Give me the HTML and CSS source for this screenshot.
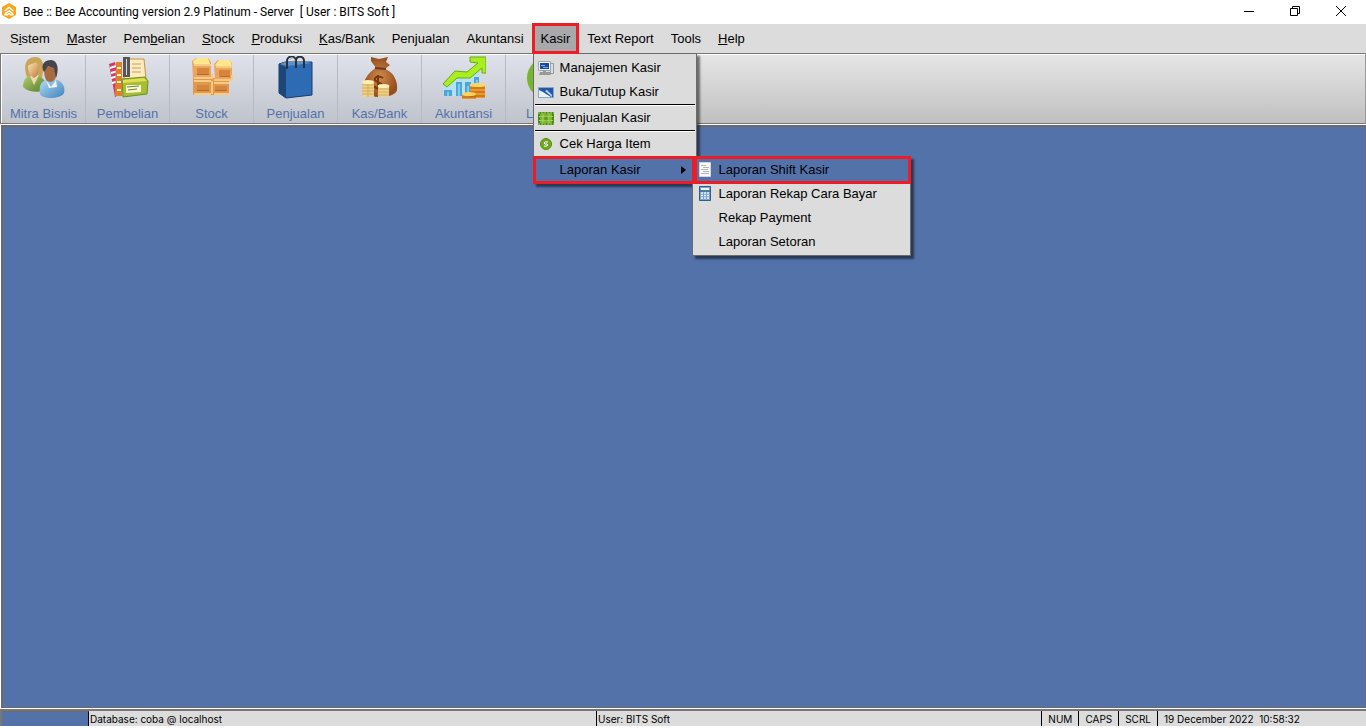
FILE: index.html
```html
<!DOCTYPE html>
<html lang="id">
<head>
<meta charset="utf-8">
<title>Bee Accounting</title>
<link rel="stylesheet" href="styles.css">
</head>
<body>
<div class="window">
  <header class="titlebar">
    <svg class="logo" viewBox="0 0 14 16"><path d="M7 0l7 4v8l-7 4-7-4V4z" fill="#f9a51b"/><path d="M2.500 8L7 4.500 11.500 8M3 11.500l1-1.500 3-2 3 2 1 1.500-2 .5-2-1.500L5 12z" fill="none" stroke="#fff" stroke-width="1.500"/></svg>
    <h1 class="title">Bee :: Bee Accounting version 2.9 Platinum - Server&nbsp; [ User : BITS Soft ]</h1>
    <div class="controls">
      <button class="control" aria-label="Minimize"><svg viewBox="0 0 12 12"><path d="M1 6.500h10" /></svg></button>
      <button class="control" aria-label="Restore"><svg viewBox="0 0 12 12"><path d="M1.500 3.500h7v7h-7zM3.500 3.500v-2h7v7h-2"/></svg></button>
      <button class="control" aria-label="Close"><svg viewBox="0 0 12 12"><path d="M1 1l10 10M11 1L1 11"/></svg></button>
    </div>
  </header>
  <nav class="menubar">
    <button class="menu">S<u>i</u>stem</button>
    <button class="menu"><u>M</u>aster</button>
    <button class="menu">Pem<u>b</u>elian</button>
    <button class="menu"><u>S</u>tock</button>
    <button class="menu"><u>P</u>roduksi</button>
    <button class="menu"><u>K</u>as/Bank</button>
    <button class="menu">Penjualan</button>
    <button class="menu">Akuntansi</button>
    <div class="menu-holder">
      <button class="menu open marked">Kasir</button>
      <div class="popup main-popup">
        <button class="item"><svg class="mini" viewBox="0 0 16 16"><path d="M12.500 3.500h3v10h-3z" fill="#ddd" stroke="#999"/><path d="M.5 1.500h12v9H.5z" fill="#f4f4f4" stroke="#9aa6b8"/><path d="M2 3h9v6H2z" fill="#174d9b"/><path d="M3 5.500h4M5 7.500h5" stroke="#78b5e8"/><path d="M5 11h3v1H5zM2 12h10l1 3H1z" fill="#999"/></svg>Manajemen Kasir</button>
        <button class="item"><svg class="mini" viewBox="0 0 16 16"><path d="M.5 3.500h15v10H.5z" fill="#2458a8" stroke="#8ba4cc"/><path d="M1 6l4 2 3 2 5 3H1z" fill="#eaf2fc"/><path d="M7 7l2-1 5 5v2z" fill="#bdd9f4"/></svg>Buka/Tutup Kasir</button>
        <hr class="separator">
        <button class="item"><svg class="mini" viewBox="0 0 16 16"><path d="M0 2h16v13H0z" fill="#4a8a0c"/><path d="M2 4h12v9H2z" fill="#79b52d"/><path d="M0 3h16M0 14h16" stroke="#b2d678" stroke-dasharray="2 1"/><path d="M1 6.500h14M1 10.500h14M5 3v11M11 3v11" stroke="#a6cf66"/><circle cx="8" cy="8.500" r="2" fill="#5f9f1b"/></svg>Penjualan Kasir</button>
        <hr class="separator">
        <button class="item"><svg class="mini" viewBox="0 0 16 16"><circle cx="8" cy="8" r="5.500" fill="#70aa24" stroke="#528b12"/><path d="M10 6H7l-1 1 1 1h2l1 1-1 1H6" fill="none" stroke="#fff"/></svg>Cek Harga Item</button>
        <hr class="separator clear">
        <div class="submenu-holder">
          <button class="item selected marked"><span class="mini"></span>Laporan Kasir<svg class="arrow" viewBox="0 0 5 8"><path d="M0 0l5 4-5 4z"/></svg></button>
          <div class="popup sub-popup">
            <button class="item selected marked"><svg class="mini" viewBox="0 0 16 16"><path d="M2.500.5h11v14h-11z" fill="#f8f8f8" stroke="#d4d4d4"/><path d="M4 3.500h5M6 5.500h6M4 7.500h7M6 9.500h6M4 11.500h8" stroke="#b4b4b4"/></svg>Laporan Shift Kasir</button>
            <button class="item"><svg class="mini" viewBox="0 0 16 16"><path d="M2.500.5h11v14h-11z" fill="#7da3ca" stroke="#2e5c8b"/><path d="M4 2h8v2H4z" fill="#edf7ff"/><path d="M3 5h10" stroke="#20517f"/><path d="M4 7h8M4 9.500h8M4 12h8" stroke="#e5f2ff" stroke-width="1.500" stroke-dasharray="2 1"/></svg>Laporan Rekap Cara Bayar</button>
            <button class="item"><span class="mini"></span>Rekap Payment</button>
            <button class="item"><span class="mini"></span>Laporan Setoran</button>
          </div>
        </div>
      </div>
    </div>
    <button class="menu">Text Report</button>
    <button class="menu">Tools</button>
    <button class="menu"><u>H</u>elp</button>
  </nav>
  <div class="toolbar">
    <div class="tools">
      <button class="tool"><svg class="icon" viewBox="0 0 44 44">
        <defs><linearGradient id="face" x2="1" y2="1"><stop stop-color="#ffe8b8"/><stop offset="1" stop-color="#bd7840"/></linearGradient><linearGradient id="shirt" x2="1" y2="1"><stop stop-color="#b8dcf6"/><stop offset="1" stop-color="#3d83bb"/></linearGradient><linearGradient id="green" x2="1" y2="1"><stop stop-color="#b8cf75"/><stop offset="1" stop-color="#527b25"/></linearGradient></defs>
        <path d="M4 18C1 6 6 1 14 1c7 0 9 9 6 20H5z" fill="#c9a559"/><path d="M1 31c0-8 4-12 11-12 8 0 12 5 12 14-4 4-17 4-23-2z" fill="url(#green)"/><path d="M8 20l4 9 5-10z" fill="#eed9ad"/><path d="M6 10c2-2 5-2 8-4 4 3 4 14-2 16-4-2-6-7-6-12z" fill="url(#face)"/>
        <path d="M18 38c-2-10 3-15 12-15 9 0 14 7 12 14-3 6-21 7-24 1z" fill="url(#shirt)"/><path d="M24 24l5 7 5-7 1 7-8 1z" fill="#edf8ff"/><path d="M22 11c0 12 2 15 7 15 6-2 7-10 6-17z" fill="#a76b42"/><path d="M21 14c-2-6 2-10 8-10 7 0 8 10 5 18l-2-10-6-2-4 6z" fill="#45444a"/></svg>Mitra Bisnis</button>
      <button class="tool"><svg class="icon" viewBox="0 0 44 44"><path d="M3 8l6-2 6 32-6 3z" fill="#d43869"/><path d="M4 12l6-2M5 17l7-2M5 22l7-2M6 27l7-2" stroke="#fff" stroke-width="2"/><path d="M10 6h6v34h-7z" fill="#de812d"/><path d="M11 12h4M11 19h4M11 26h4M11 34h4" stroke="#fff4b8" stroke-width="2"/><path d="M20 3h18l2 20H18z" fill="#ffebbd" stroke="#c59345"/><path d="M17 1h7v20h-7z" fill="#565656"/><path d="M20 3h1v16h-1z" fill="#d8d8d8"/><path d="M26 8h9M26 12h9M26 16h9" stroke="#c3a06b"/><path d="M16 23l23-2 3 4-1 13-24 3z" fill="#a6bd34" stroke="#69931d"/><path d="M17 24l21-2 3 3-24 2z" fill="#e5dd55"/><path d="M20 29h15v7l-15 1z" fill="#f6f8d1"/><path d="M21 31l12-1M22 34l9-1" stroke="#747f3d"/></svg>Pembelian</button>
      <button class="tool"><svg class="icon" viewBox="0 0 44 44"><path d="M3 21h19v18H3zM22 22h17v17H22z" fill="#e0984f"/><path d="M2 5l4-3h12l3 4v16H3zM24 8l4-4h12l2 4v15H25z" fill="#eba55c"/><path d="M3 5l4-3h11l2 6H4zM25 9l4-5h11l2 6H26z" fill="#ffe88b"/><path d="M4 9h17M26 11h16M4 22h18v-4M24 24h18v-5M4 25h17M24 27h15M22 25v13M4 38h17M24 38h15" fill="none" stroke="#f8ca83" stroke-width="2"/><path d="M7 12h12v7H7zM29 14h11v7H29zM7 29h12v6H7zM25 30h12v5H25z" fill="#d5863d"/><path d="M7 18.500h12M30 20.500h10M7 34.500h12M25 34.500h12" stroke="#b9682b"/></svg>Stock</button>
      <button class="tool"><svg class="icon" viewBox="0 0 44 44"><path d="M5 8l6-2h27v33L12 42 5 37z" fill="#2d6cb4" stroke="#173b69"/><path d="M5 8l7 3v31l-7-5z" fill="#1a4678"/><path d="M6 8l7 2 25-3-6-1H11z" fill="#5b91c7"/><path d="M13 13V5c0-6 9-6 9 0v7M22 11V4c1-5 8-4 8 1v7" fill="none" stroke="#29303b" stroke-width="2"/><path d="M16 4c1-3 4-3 5 1" fill="none" stroke="#aaa"/></svg>Penjualan</button>
      <button class="tool"><svg class="icon" viewBox="0 0 44 44"><defs><radialGradient id="bag"><stop stop-color="#d18a4c"/><stop offset="1" stop-color="#974f20"/></radialGradient></defs><path d="M13 1l8 2 9-2-2 5 4 3-5 4c9 3 13 13 12 21-2 9-27 9-34 2-2-9 5-20 13-24l-5-7z" fill="url(#bag)"/><path d="M17 12l11 1" stroke="#6f3818" stroke-width="2"/><path d="M25 22c-4-3-9-1-8 2s8 2 7 6-6 3-8 0m4-11v15" fill="none" stroke="#75370b" stroke-width="2"/><path d="M4 26h12v15H4zM20 30h11v11H20z" fill="#efd18a"/><path d="M4 29h12M4 32h12M4 35h12M4 38h12M10 26v15M20 33h11M20 36h11M20 39h11" stroke="#d1ad5c"/><ellipse cx="10" cy="26" rx="6" ry="2" fill="#fff1b6"/><ellipse cx="25.500" cy="30" rx="6" ry="2" fill="#fff1b6"/></svg>Kas/Bank</button>
      <button class="tool"><svg class="icon" viewBox="0 0 44 44"><path d="M1 30l15-13 21-4 2 27H1z" fill="#b4e1f6"/><path d="M2 34h8v6H2zM14 26h6v14h-6zM23 26h6v14h-6zM32 21h5v19h-5z" fill="#4ea5d6"/><path d="M5 36h2v4H5zM16 28h2v12h-2zM25 30h2v10h-2zM34 24h2v16h-2z" fill="#80caef"/><path d="M1 28l12-13 12 1L36 7l-8-1V1h16v16h-4v-5L28 22H15L5 31z" fill="#a9ee20" stroke="#69a90a"/><path d="M28 29h15v13H28zM20 38h14v5H20z" fill="#eb992a"/><path d="M28 32h15M28 36h15M28 40h15M20 41h14" stroke="#b35c11"/><ellipse cx="35.500" cy="29" rx="8" ry="2" fill="#ffd561"/><ellipse cx="27" cy="38" rx="7" ry="2" fill="#ffd561"/></svg>Akuntansi</button>
      <button class="tool partial"><svg class="icon" viewBox="0 0 44 44"><circle cx="22" cy="22" r="21" fill="#76b62c"/></svg>L</button>
      <button class="tool" aria-label="Tool"></button>
    </div>
  </div>
  <main class="workspace"></main>
  <footer class="status">
    <span class="cell progress"></span>
    <span class="cell database">Database: coba @ localhost</span>
    <span class="cell user">User: BITS Soft</span>
    <span class="cell key">NUM</span>
    <span class="cell key">CAPS</span>
    <span class="cell key">SCRL</span>
    <span class="cell clock">19 December 2022&nbsp; 10:58:32</span>
  </footer>
</div>
</body>
</html>
```
FILE: styles.css
```css
* { box-sizing: border-box; }
body { margin: 0; font: 13px/16px "Liberation Sans", Arial, sans-serif; color: #000; background: #fff; }
button { margin: 0; padding: 0; border: 0; background: none; color: inherit; font: inherit; }
.window { display: flex; flex-direction: column; height: 100vh; padding-bottom: 2px; }
.titlebar { display: flex; align-items: center; height: 24px; padding: 0 2px; }
.logo { width: 14px; height: 16px; margin: 0 7px 2px 0; }
.title { flex: 1; margin: 0; font: 12px/24px Roboto, "Noto Sans", sans-serif; white-space: nowrap; }
.controls { display: flex; padding-bottom: 2px; }
.control { width: 46px; height: 20px; }
.control svg { display: block; width: 12px; height: 12px; margin: auto; fill: none; stroke: #000; }
.menubar { display: flex; gap: 1px; height: 29px; padding-left: 2px; background: #dcdcdc; }
.menu { padding: 0 8px; height: 29px; white-space: nowrap; }
.menu-holder, .submenu-holder { position: relative; }
.open { background: #a9a9ac; }
.marked { position: relative; }
.marked::after { content: ""; position: absolute; inset: -2px; border: 3px solid #ee1c25; z-index: 3; }
.open::after { inset: -1px; }
.popup { position: absolute; z-index: 2; background: #dcdcdc; border: 1px solid #6b6b6b; box-shadow: 3px 3px 2px rgba(0, 0, 0, .5); }
.main-popup { top: 29px; left: 0; width: 164px; padding: 2px 1px 1px; }
.sub-popup { top: -2px; left: 157px; width: 219px; padding: 1px; }
.item { display: flex; align-items: center; width: 100%; height: 24px; padding-left: 3px; gap: 6px; text-align: left; white-space: nowrap; }
.mini { width: 16px; height: 16px; flex: none; }
.selected { background: #5472aa; }
.separator { height: 2px; margin: 0; border: 0; border-top: 1px solid #000; background: #fff; }
.clear { visibility: hidden; }
.arrow { width: 5px; height: 8px; margin: 0 9px 0 auto; }
.toolbar { height: 71px; border: 1px solid #777; border-right-color: #999; box-shadow: inset 1px 1px #fff; padding: 1px; background: linear-gradient(#e6e6e6, #c0c0c0); }
.tools { display: flex; height: 68px; width: 696px; border-radius: 8px; background: linear-gradient(#dfe2ea, #bfc3cb); overflow: hidden; }
.tool { display: flex; flex-direction: column; align-items: center; width: 84px; flex: none; color: #5472aa; border-right: 1px solid #b5bac3; }
.partial { align-items: flex-start; padding-left: 20px; }
.icon { width: 44px; height: 44px; margin: 1px 0 6px; }
.workspace { flex: 1; margin: 1px 0 1px 1px; border: 1px solid #6b6b6b; border-width: 2px 1px 1px 2px; background: #5472aa; }
.status { display: flex; height: 17px; border-top: 2px solid #777; border-left: 2px solid #777; background: #dcdcdc; font: 10px/16px Inter, "Liberation Sans", sans-serif; white-space: nowrap; }
.cell { padding-left: 1px; border-right: 1px solid #000; }
.progress { width: 87px; border-top: 1px solid #6b6b6b; background: #5472aa; }
.database { width: 508px; }
.user { flex: 1; }
.key { padding: 0 6px; }
.clock { width: 208px; padding-left: 6px; border-right: 0; }
```
